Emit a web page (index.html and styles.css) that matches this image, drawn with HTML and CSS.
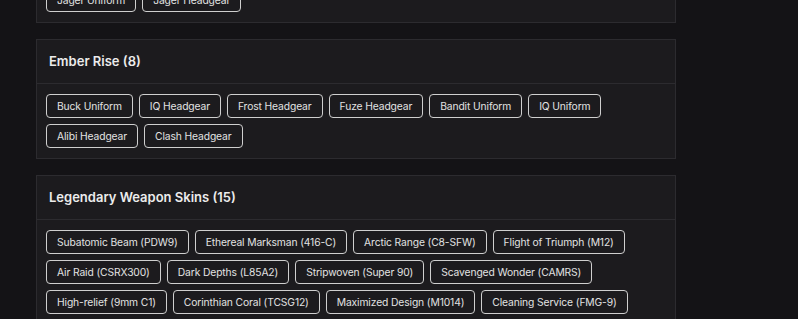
FILE: index.html
```html
<!DOCTYPE html>
<html lang="en">

<head>
    <meta charset="UTF-8">
    <meta name="viewport" content="width=device-width, initial-scale=1.0">
    <title>Rewards</title>
    <link rel="stylesheet" href="styles.css">
</head>

<body>

    <div class="page">
        <!-- Previous section, scrolled mostly out of view -->
        <div class="card">
            <div class="card-header">Jager Set (2)</div>
            <div class="tags">
                <span class="tag">Jager Uniform</span>
                <span class="tag">Jager Headgear</span>
            </div>
        </div>

        <div class="card">
            <div class="card-header">Ember Rise (8)</div>
            <div class="tags">
                <span class="tag">Buck Uniform</span>
                <span class="tag">IQ Headgear</span>
                <span class="tag">Frost Headgear</span>
                <span class="tag">Fuze Headgear</span>
                <span class="tag">Bandit Uniform</span>
                <span class="tag">IQ Uniform</span>
                <span class="tag">Alibi Headgear</span>
                <span class="tag">Clash Headgear</span>
            </div>
        </div>

        <div class="card">
            <div class="card-header">Legendary Weapon Skins (15)</div>
            <div class="tags">
                <span class="tag">Subatomic Beam (PDW9)</span>
                <span class="tag">Ethereal Marksman (416-C)</span>
                <span class="tag">Arctic Range (C8-SFW)</span>
                <span class="tag">Flight of Triumph (M12)</span>
                <span class="tag">Air Raid (CSRX300)</span>
                <span class="tag">Dark Depths (L85A2)</span>
                <span class="tag">Stripwoven (Super 90)</span>
                <span class="tag">Scavenged Wonder (CAMRS)</span>
                <span class="tag">High-relief (9mm C1)</span>
                <span class="tag">Corinthian Coral (TCSG12)</span>
                <span class="tag">Maximized Design (M1014)</span>
                <span class="tag">Cleaning Service (FMG-9)</span>
                <span class="tag">Ocean Fire (SPAS-12)</span>
                <span class="tag">Golden Hour (F2)</span>
                <span class="tag">Arc Light (SMG-11)</span>
            </div>
        </div>
    </div>

</body>

</html>
```

FILE: styles.css
```css
body {
    font-family: Inter, "Noto Sans", sans-serif;
    margin: 0;
    padding: 0;
    background-color: #141316;
    color: #e4e4e4;
}

.page {
    width: 640px;
    margin-left: 36px;
    margin-top: -67px;
    display: flex;
    flex-direction: column;
    gap: 16px;
}

.card {
    background-color: #1c1b1e;
    border: 1px solid #2c2b2f;
}

.card-header {
    height: 43px;
    line-height: 43px;
    padding: 0 12px;
    font-size: 13px;
    font-weight: 600;
    color: #ececec;
    border-bottom: 1px solid #2c2b2f;
}

.tags {
    display: flex;
    flex-wrap: wrap;
    gap: 6px;
    padding: 10px 9px;
}

.tag {
    height: 22px;
    line-height: 22px;
    padding: 0 10px;
    font-size: 10.3px;
    letter-spacing: -0.12px;
    color: #e2e2e2;
    border: 1px solid #cfcfcf;
    border-radius: 4px;
    white-space: nowrap;
}
```
